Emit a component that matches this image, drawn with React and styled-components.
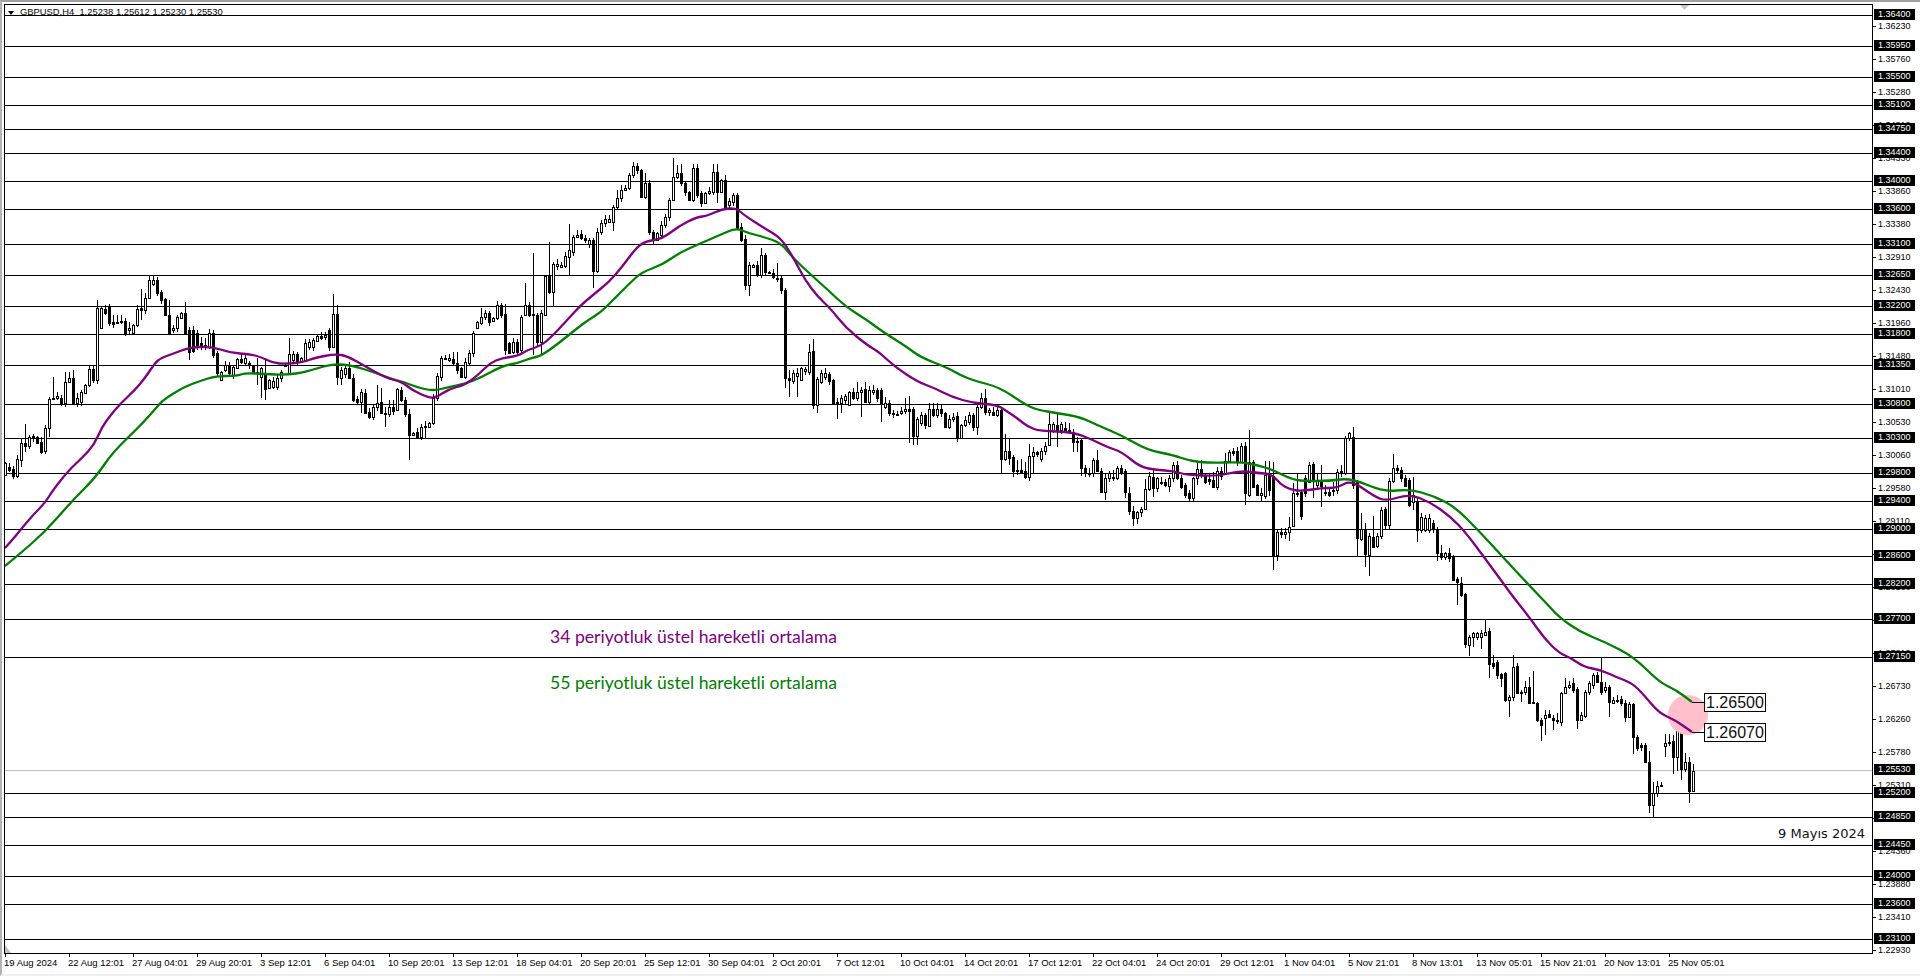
import React from 'react'
import styled, { createGlobalStyle } from 'styled-components'

const GlobalStyle = createGlobalStyle`
  html, body { margin: 0; background: #fff; overflow: hidden; }
  body { font-family: "Liberation Sans", Arial, sans-serif; color: #000; }
`

// page coordinates of the plot's inner corner, the svg viewBox starts here
const PLOT_X = 5
const PLOT_Y = 5
const PLOT_W = 1867
const PLOT_H = 948

const levels = [
  [`1.36400`, 15], [`1.35950`, 46], [`1.35500`, 77], [`1.35100`, 105], [`1.34750`, 129], [`1.34400`, 153],
  [`1.34000`, 181], [`1.33600`, 209], [`1.33100`, 244], [`1.32650`, 275], [`1.32200`, 306], [`1.31800`, 334],
  [`1.31350`, 365], [`1.30800`, 404], [`1.30300`, 438], [`1.29800`, 473], [`1.29400`, 501], [`1.29000`, 529],
  [`1.28600`, 556], [`1.28200`, 584], [`1.27700`, 619], [`1.27150`, 657], [`1.25200`, 793], [`1.24850`, 817],
  [`1.24450`, 845], [`1.24000`, 876], [`1.23600`, 904], [`1.23100`, 939]
]

const scaleTicks = [
  `1.36230`, `1.35760`, `1.35280`, `1.34810`, `1.34330`, `1.33860`, `1.33380`, `1.32910`, `1.32430`, `1.31960`,
  `1.31480`, `1.31010`, `1.30530`, `1.30060`, `1.29580`, `1.29110`, `1.28630`, `1.28160`, `1.27680`, `1.27210`,
  `1.26730`, `1.26260`, `1.25780`, `1.25310`, `1.24830`, `1.24360`, `1.23880`, `1.23410`, `1.22930`
]

const priceToY = price => 14.5 + (1.364 - Number(price)) * 6947

const dates = [
  `19 Aug 2024`, `22 Aug 12:01`, `27 Aug 04:01`, `29 Aug 20:01`, `3 Sep 12:01`, `6 Sep 04:01`, `10 Sep 20:01`,
  `13 Sep 12:01`, `18 Sep 04:01`, `20 Sep 20:01`, `25 Sep 12:01`, `30 Sep 04:01`, `2 Oct 20:01`, `7 Oct 12:01`,
  `10 Oct 04:01`, `14 Oct 20:01`, `17 Oct 12:01`, `22 Oct 04:01`, `24 Oct 20:01`, `29 Oct 12:01`, `1 Nov 04:01`,
  `5 Nov 21:01`, `8 Nov 13:01`, `13 Nov 05:01`, `15 Nov 21:01`, `20 Nov 13:01`, `25 Nov 05:01`
]

const ema34 = [
  5,548, 14,538, 22,528, 33,515, 45,503, 53,490, 69,470, 82,458, 94,445, 102,427, 110,416, 120,404, 135,390, 145,378,
  155,363, 161,358, 175,353, 188,348, 210,346, 231,353, 249,354, 261,357, 273,363, 286,364, 304,362, 314,358, 335,354,
  347,356, 363,365, 386,378, 402,382, 412,390, 429,398, 437,397, 449,389, 465,385, 478,375, 490,363, 502,358, 518,356,
  527,350, 541,346, 551,337, 558,330, 569,318, 581,305, 593,295, 609,282, 622,267, 636,248, 646,241, 662,239, 679,226,
  697,217, 707,216, 722,209, 736,208, 744,215, 764,228, 781,238, 793,257, 805,280, 818,297, 830,308, 846,328, 867,345,
  879,352, 895,367, 918,382, 932,387, 952,397, 973,403, 997,405, 1005,410, 1017,418, 1028,427, 1040,431, 1073,432,
  1093,440, 1107,447, 1122,452, 1140,467, 1157,470, 1173,471, 1187,475, 1217,476, 1230,473, 1245,471, 1257,473,
  1272,474, 1280,484, 1291,490, 1303,491, 1321,488, 1337,488, 1351,480, 1375,497, 1387,501, 1409,494, 1430,502,
  1451,517, 1466,533, 1484,557, 1503,583, 1514,598, 1530,618, 1544,638, 1559,653, 1571,658, 1584,667, 1601,670,
  1616,677, 1632,683, 1644,695, 1659,713, 1675,720, 1692,732
]

const ema55 = [
  5,566, 16,557, 45,532, 71,502, 96,477, 112,453, 141,425, 157,407, 163,400, 184,387, 200,381, 216,376, 237,376,
  245,373, 265,374, 286,375, 306,372, 331,364, 351,365, 376,373, 392,379, 404,382, 416,387, 433,391, 449,387, 465,384,
  482,377, 502,366, 518,363, 531,358, 541,356, 559,343, 575,330, 588,320, 600,313, 613,300, 630,283, 642,272, 662,265,
  679,253, 699,244, 720,235, 736,228, 748,233, 764,237, 781,243, 793,258, 809,273, 828,290, 846,307, 867,320, 883,332,
  907,347, 920,357, 948,368, 960,375, 975,381, 999,387, 1026,405, 1038,410, 1057,413, 1080,417, 1097,425, 1123,436,
  1147,450, 1173,455, 1190,461, 1210,463, 1240,462, 1257,465, 1273,470, 1291,479, 1303,481, 1330,481, 1351,478,
  1384,492, 1409,489, 1434,496, 1455,507, 1478,530, 1501,555, 1526,582, 1548,605, 1559,617, 1580,632, 1605,642,
  1634,657, 1659,682, 1676,690, 1692,702
]

// candles, traced at 3x: each segment has its first bar's x and a y base, bars sit 4px apart
// a bar is [top, bottom, dark, wickTop, wickBottom], y = base + value / 3
const segments = [
  { x: 5, base: 330, bars: [
    [400,435,0],[412,420,1],[418,438,1],[388,438,0,375,445],[340,390,0,325,410],[340,348,1,282,365],[322,348,0,315],[318,323,1],
    [322,340,1],[335,365,1,320,372],[295,362,0],[207,295,0,200,320],[203,207,0,142],[197,205,0],[205,218,1],[157,220,0,125],
    [145,157,0,125],[145,218,1,120],[205,218,0,190,232],[185,215,0],[165,190,0],[118,165,0],[118,150,1],[-66,150,0,-90]
  ] },
  { x: 101, base: 0, bars: [
    [925,985,0],[928,940,1],[920,968,1],[965,972,1,945],[965,968,0,945],[962,966,1,945],[962,1000,1],[985,990,0,965],[975,1000,0],
    [928,975,0],[925,930,1,868,960],[895,930,0,878],[840,895,0,828],[840,852,0],[840,880,1],[875,900,1],[898,945,1],[945,1000,1,900],
    [985,990,0,975],[950,985,0],[940,955,0],[940,1000,1,907]
  ] },
  { x: 189, base: 330, bars: [
    [0,65,1,-10,90],[0,63,1],[10,50,1],[40,48,1,20,60],[45,50,1,25,60],[10,50,0],[10,75,1],[70,130,1],[125,150,0],[105,120,0],
    [105,130,1],[110,135,0],[88,115,0],[88,95,1,70],[85,100,0],[100,105,1],[108,130,1],[125,130,1,85,165],[115,140,0,110,205],
    [130,178,1,85,210],[150,175,0],[152,170,0],[145,170,0],[125,145,0],[105,108,0],[72,130,0,25],[72,90,0],[72,92,1],[85,92,0],
    [40,90,0],[35,50,0],[30,50,0],[18,32,0],[18,25,1],[15,20,0],[0,50,1],[-48,50,0,-108],[-48,140,1,-75,165],[120,145,0,110,165],
    [115,133,0],[115,145,1,95],[145,210,1],[208,215,1],[185,215,0,178,250],[190,248,1,178],[245,260,1],[232,260,0],[220,230,0,165],
    [217,250,1,175],[250,252,1,232,290],[232,252,0,210],[230,242,1,210],[178,240,0],[180,210,1,172],[210,253,1],[253,315,1,238,390],
    [308,315,0],[305,320,1],[290,320,0],[288,292,0,272,325],[278,290,0],[205,278,0],[137,205,0],[85,140,0,78],[85,88,0,75],[85,90,0,72],
    [88,100,1,65],[100,120,1,65],[115,140,1],[95,140,0],[70,100,0],[10,70,0],[-24,-6,0],[-40,-20,0,-67],[-50,-40,0],[-50,-25,1],
    [-35,-28,0],[-75,-35,0],[-75,-45,1,-80],[-47,60,1,-78,75],[40,70,1],[35,65,0],[35,65,1],[-40,60,0],[-75,-45,0,-140],[-75,-45,1,-85],
    [-48,-45,0,-230,75],[-45,35,1],[-50,35,0,-60,75]
  ] },
  { x: 545, base: 140, bars: [
    [408,525,0],[408,455,1,306],[373,455,0,365,500],[373,378,0,358],[375,380,0,365],[348,378,0],[330,350,0,252,405],[290,335,0],
    [285,290,0,270],[283,295,1,270],[295,300,1,285],[300,312,0,295],[300,392,1,295,445],[277,392,0],[250,277,0,240],[236,250,0,225],
    [238,245,0,225],[202,245,0,195,272],[175,202,0,150],[150,175,0,135],[145,150,0,135],[105,145,0,100],[78,105,0,67],[78,90,1,70],
    [90,172,1],[130,172,0,100],[130,275,1],[275,300,1],[280,300,0],[255,285,0],[230,255,0],[180,230,0],[110,180,0,55],[100,110,0,75],
    [100,130,1,72],[130,155,1],[155,180,1],[85,180,0],[85,165,1,72],[160,190,1],[160,188,0],[152,160,0],[97,155,0,72],[97,155,1,72,190],
    [120,155,0],[120,205,1,105],[182,195,0],[165,185,0],[165,265,1,160],[262,300,1],[298,435,1,285,450],[375,435,0,365,467],[375,380,0],
    [375,405,1],[345,405,0,325],[345,395,1],[395,400,1],[400,412,1],[415,418,0,370],[415,450,1],[450,715,1,445,745],[715,720,1,690,770],
    [700,722,0],[700,708,0,685,770],[685,720,0],[688,692,0,680,705],[635,695,0,612],[633,795,1,598],[718,795,0,712,818],[700,725,0,690],
    [700,710,0,685],[702,722,1],[720,788,1],[788,790,1,775,838],[775,790,0,765,820],[768,780,0],[755,795,0],[755,775,1],[755,775,0,725],
    [750,755,0,740,830],[748,785,1,725],[750,785,0],[750,755,0,735],[750,775,1],[750,790,1,745,845],[788,800,0,770],[788,820,1],[820,823,1,810],
    [822,825,0,812],[812,820,0,800],[808,812,0,775],[808,812,1,767,910],[808,888,1,800,915],[838,888,0,830,915],[825,850,0],[825,855,1],
    [808,858,0,790],[808,825,1,790],[808,825,0,790],[808,820,1,795],[820,860,1],[838,862,0],[832,836,0,818],[828,893,1,815],[855,895,0],
    [840,855,0],[825,845,0,815],[825,862,1],[800,862,0,790,885],[775,800,0,758],[775,815,1,748],[810,815,0],[815,825,1,800],[810,825,0]
  ] },
  { x: 1001, base: 410, bars: [
    [0,147,1,-5,190],[122,147,0,72],[122,145,1,85,165],[142,182,1,135,200],[180,183,1,150,195],[180,185,1,147,190],[183,200,1,157,207],
    [137,200,0,102],[127,137,0,110,190],[127,133,1,122,140],[122,148,0,115],[107,122,0,97],[42,105,0,10],[42,62,0,35],[45,60,1,10,110],
    [43,60,0],[55,60,1,35],[60,65,1,40],[65,97,1,57,127],[93,97,1,80,125],[90,175,1,85,197],[175,190,1,165,200],[190,192,1,175],
    [150,190,0,145],[150,182,1,120],[182,245,1,175,247],[203,245,0,190,270],[188,203,0,182],[203,205,1,180,212],[175,203,0,168],
    [175,185,1,165],[183,247,1,178,265],[250,302,1,232,315],[302,325,1,288,347],[307,325,0,302,342],[298,307,0,292,322],[238,298,0,208],
    [198,238,0,185],[200,235,1,180,260],[205,235,0,200],[217,219,0,200,225],[217,225,1,208],[203,228,0,195,245],[165,203,0,155],
    [165,203,1,152,210],[203,232,1,195],[225,255,1,220],[250,263,1,240,275],[203,263,0,200,277],[178,203,0,155,225],[178,195,1,150],
    [197,215,1,190,222],[207,212,1,190,225],[210,230,1,185,235],[182,230,0,172],[182,197,1,170],[152,190,0,130],[125,152,0,120],
    [123,128,1,115],[122,155,1,112],[108,155,0,100],[108,250,1,95,285],[155,255,0,60,260],[155,230,1,150,235],[225,255,1,222],
    [250,255,0,235,272],[195,258,0,152],[195,240,1,152,258],[198,435,1,155,480],[367,435,0,360,452],[365,372,1,355,385],[365,372,0,355,387],
    [352,367,0,320,392]
  ] },
  { x: 1293, base: 410, bars: [
    [248,348,0,220],[248,252,0,190,260],[245,318,1,240,330],[205,250,1,195],[165,215,0,155],[163,210,1,155,265],[210,225,0,190],
    [215,228,1,165,290],[245,250,1,225,258],[245,255,1,230,260],[240,244,0,215,258],[185,240,0,178],[182,188,1,165,200],[85,190,0,78],
    [70,85,0,65],[80,225,1,52],[215,385,1,210,440],[358,388,0,310],[358,433,1,340,472],[378,435,0,370,497],[380,410,1,318],[378,408,0,370],
    [300,378,0,290],[298,345,1,292],[213,345,0,205,360],[175,213,0,132],[175,180,1,165],[180,205,1,172],[205,228,1,195],[210,285,1,205,290],
    [255,275,0,200,300],[272,360,1,265,395],[320,360,0,310,368],[325,360,0,315],[325,360,0,312],[338,358,1,330],[358,428,1,350,452],
    [428,440,1,405,450],[430,440,0,425],[428,445,1,415],[440,510,1,435],[508,515,1,500,585],[520,555,1,500,560],[552,703,1,548],
    [680,705,0,675,737],[670,680,0,665,712],[670,682,0,665],[670,682,0,660,717],[665,675,0,628],[662,762,1,655,805],[760,768,1,735],
    [755,795,1,750],[792,805,1,788,832],[790,870,1,785],[860,870,0,855,922],[770,860,0,735],[768,850,1,760],[845,848,1,840,875],[832,845,0,812],
    [830,878,1,800,882],[878,880,1,782],[880,930,1,875],[930,945,1,925,992],[915,925,0,900,975],[912,920,1,900],[925,930,1,915,960],
    [930,934,0,910],[850,935,0,845],[830,850,0,805],[825,830,0,812],[820,840,1,805],[838,930,1,832,958],[915,930,0,905],[845,918,0,840],
    [820,845,0,812],[795,825,0,788],[795,815,1,785],[815,845,1,745,855],[830,840,0,815],[830,875,1,825,922],[870,880,0,860],[870,874,0,855],
    [868,880,1,858],[878,920,1,870,935]
  ] },
  { x: 1629, base: 640, bars: [
    [192,232,0,185],[192,292,1,188,343],[292,325,1,285],[315,320,1,308],[315,367,1,308],[365,495,1,332,518],[458,495,0,425,532],[438,458,0,423],
    [435,438,1,425],[308,318,0,283,352],[305,310,0,283],[303,350,1,285,403],[270,350,0,265,393],[270,388,1,268,420],[365,388,0,340],
    [365,452,1,352,490],[392,452,0,372,456]
  ] }
]

const candles = segments.flatMap(({ x, base, bars }) =>
  bars.map(([top, bottom, dark, wickTop, wickBottom], i) => {
    const toY = v => Math.round(base + v / 3)
    const low = toY(bottom)
    const high = Math.min(toY(top), low - 1)
    return {
      x: x + i * 4,
      top: high,
      bottom: low,
      dark: !!dark,
      wickTop: wickTop === undefined ? high - ((i * 7) % 4) - 1 : Math.min(toY(wickTop), high),
      wickBottom: wickBottom === undefined ? low + ((i * 5) % 4) + 1 : Math.max(toY(wickBottom), low)
    }
  })
)

// the traced points are sparse, round the corners through the midpoints
const toCurve = flat => {
  let d = `M${flat[0]} ${flat[1]}`
  for (let i = 2; i < flat.length - 2; i += 2) {
    d += ` Q${flat[i]} ${flat[i + 1]} ${(flat[i] + flat[i + 2]) / 2} ${(flat[i + 1] + flat[i + 3]) / 2}`
  }
  return `${d} L${flat[flat.length - 2]} ${flat[flat.length - 1]}`
}

const Page = styled.div`
  box-sizing: border-box;
  width: 1920px;
  height: 976px;
  padding: 2px 0 0 2px;
  border-top: 2px solid #a0a0a0;
  border-left: 2px solid #b4b4b4;
  border-bottom: 2px solid #f0f0f0;
  background: #fff;
  display: grid;
  grid-template-columns: 1869px 1fr;
  grid-template-rows: 950px 1fr;
  overflow: hidden;
`

const Plot = styled.div`
  position: relative;
  box-sizing: border-box;
  border: 1px solid #000;
  background: #fff;
`

const Legend = styled.div`
  position: absolute;
  left: 15px;
  top: 1px;
  font-size: 9.4px;
  line-height: 12px;
  white-space: pre;
`

const ChartSvg = styled.svg`
  position: relative;
  display: block;
  width: ${PLOT_W}px;
  height: ${PLOT_H}px;
`

const LevelLine = styled.line`
  stroke: ${p => p.$color || `#000`};
  stroke-width: 1;
  shape-rendering: crispEdges;
`

const Wick = styled.line`
  stroke: #000;
  stroke-width: 1;
  shape-rendering: crispEdges;
`

const Body = styled.rect`
  fill: ${p => p.$dark ? `#000` : `#fff`};
  stroke: #000;
  stroke-width: 1;
  shape-rendering: crispEdges;
`

const Ema = styled.path`
  fill: none;
  stroke: ${p => p.$color};
  stroke-width: 2.3;
  stroke-linejoin: round;
`

const NoteStack = styled.div`
  position: absolute;
  left: 545px;
  top: 622px;
  display: flex;
  flex-direction: column;
  gap: 26px;
`

const Note = styled.div`
  font-family: Lato, "Open Sans", sans-serif;
  font-size: 17.6px;
  line-height: 20px;
  color: ${p => p.$color};
  white-space: nowrap;
`

const DateNote = styled.div`
  position: absolute;
  right: 7px;
  top: 820px;
  font-family: "DejaVu Sans", sans-serif;
  font-size: 13px;
  line-height: 18px;
  color: #111;
  white-space: nowrap;
`

const ValueStack = styled.div`
  position: absolute;
  left: 1699px;
  top: 688px;
  display: flex;
  flex-direction: column;
  gap: 11px;
`

const ValueBox = styled.div`
  box-sizing: border-box;
  width: 62px;
  height: 19px;
  border: 1px solid #000;
  background: #fff;
  font-size: 16px;
  line-height: 17px;
  padding-left: 1px;
  color: #111;
`

const PriceAxis = styled.div`
  position: relative;
  font-size: 9px;
`

const ScaleTick = styled.div.attrs(p => ({ style: { top: `${p.$y - 6}px` } }))`
  position: absolute;
  left: 5px;
  line-height: 12px;
  &::before {
    content: "";
    position: absolute;
    left: -5px;
    top: 6px;
    width: 3px;
    height: 1px;
    background: #000;
  }
`

const LevelTag = styled.div.attrs(p => ({ style: { top: `${p.$y - 6}px` } }))`
  position: absolute;
  left: 1px;
  box-sizing: border-box;
  width: 41px;
  height: 11px;
  padding-left: 4px;
  background: #000;
  color: #fff;
  line-height: 11px;
`

const TimeAxis = styled.div`
  display: flex;
  grid-column: 1 / -1;
  padding-left: 1px;
  font-size: 9.5px;
`

const TimeSlot = styled.div`
  position: relative;
  flex: 0 0 64px;
  padding-top: 3px;
  line-height: 12px;
  white-space: nowrap;
  text-indent: -1px;
  &::before {
    content: "";
    position: absolute;
    left: 0;
    top: 0;
    width: 1px;
    height: 3px;
    background: #000;
  }
`

const lineProps = y => ({ x1: PLOT_X, x2: PLOT_X + PLOT_W, y1: y + 0.5, y2: y + 0.5 })

const Candle = ({ x, top, bottom, dark, wickTop, wickBottom }) =>
  <g>
    <Wick x1={x + 0.5} x2={x + 0.5} y1={wickTop} y2={wickBottom} />
    <Body $dark={dark} x={x - 0.5} y={top + 0.5} width={2} height={Math.max(bottom - top, 1)} />
  </g>

const Chart = () =>
  <ChartSvg viewBox={`${PLOT_X} ${PLOT_Y} ${PLOT_W} ${PLOT_H}`}>
    <polygon points="8,11 14,11 11,15" fill="#000" />
    <polygon points="1680,5 1689,5 1684.5,10" fill="#c8c8c8" />
    <polygon points="5,945 5,953 11,953" fill="#c0c0c0" />
    {levels.map(([label, y]) => <LevelLine key={label} {...lineProps(y)} />)}
    <LevelLine $color="#c0c0c0" {...lineProps(770)} />
    {candles.map(c => <Candle key={c.x} {...c} />)}
    <circle cx="1688" cy="715" r="20" fill="#ffc0cb" />
    <Ema $color="#008000" d={toCurve(ema55)} />
    <Ema $color="#800080" d={toCurve(ema34)} />
    <LevelLine x1="1692" x2="1704" y1="702.5" y2="702.5" />
    <LevelLine x1="1692" x2="1704" y1="732.5" y2="732.5" />
  </ChartSvg>

const App = () =>
  <>
    <GlobalStyle />
    <Page>
      <Plot>
        <Legend>{`GBPUSD,H4  1.25238 1.25612 1.25230 1.25530`}</Legend>
        <Chart />
        <NoteStack>
          <Note $color="#800080">34 periyotluk üstel hareketli ortalama</Note>
          <Note $color="#008000">55 periyotluk üstel hareketli ortalama</Note>
        </NoteStack>
        <DateNote>9 Mayıs 2024</DateNote>
        <ValueStack>
          <ValueBox>1.26500</ValueBox>
          <ValueBox>1.26070</ValueBox>
        </ValueStack>
      </Plot>
      <PriceAxis>
        {scaleTicks.map(tick => <ScaleTick key={tick} $y={priceToY(tick) - 4}>{tick}</ScaleTick>)}
        {levels.map(([label, y]) => <LevelTag key={label} $y={y - 4}>{label}</LevelTag>)}
        <LevelTag $y={766}>1.25530</LevelTag>
      </PriceAxis>
      <TimeAxis>
        {dates.map(date => <TimeSlot key={date}>{date}</TimeSlot>)}
      </TimeAxis>
    </Page>
  </>

export default App
